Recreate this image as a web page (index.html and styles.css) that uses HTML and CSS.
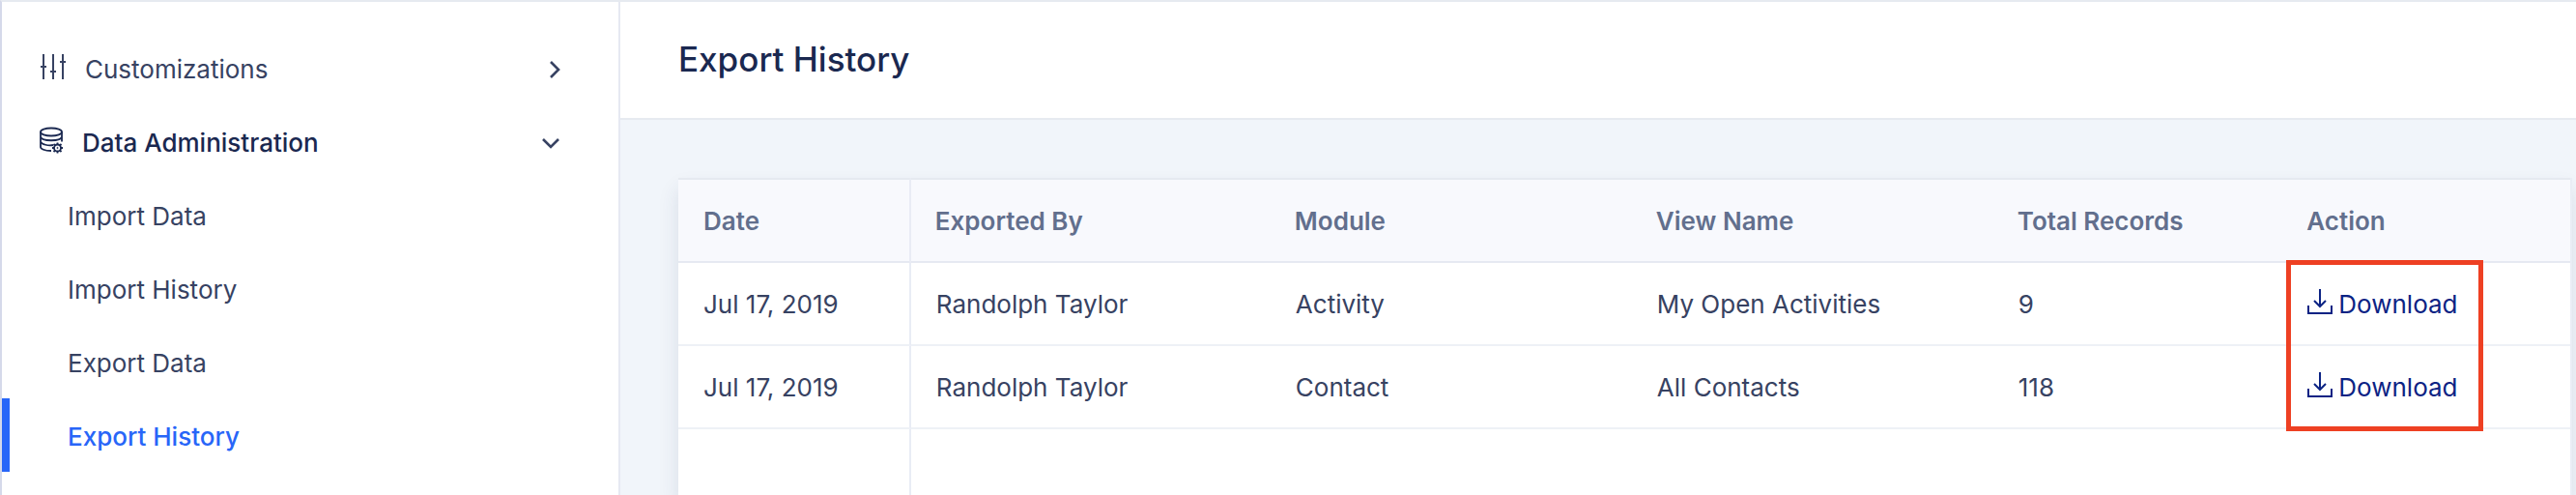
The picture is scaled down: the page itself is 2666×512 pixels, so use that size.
FILE: index.html
```html
<!DOCTYPE html>
<html lang="en">
  <head>
    <meta charset="UTF-8">
    <meta name="viewport" content="width=device-width, initial-scale=1.0">
    <title>Export History</title>
    <link rel="stylesheet" href="styles.css">
  </head>
  <body>
    <!-- Sidebar -->
    <nav class="sidebar">
      <a href="#" class="nav-group">
        <svg class="nav-icon" width="28" height="28" viewBox="0 0 28 28">
          <path d="M4 1v26M14 1v26M24 1v26M1 14h6M11 19h6M21 9h6"/>
        </svg>
        <span class="nav-label">Customizations</span>
        <svg class="chevron" width="20" height="20" viewBox="0 0 20 20">
          <path d="M10 2l8 8-8 8"/>
        </svg>
      </a>
      <a href="#" class="nav-group open">
        <svg class="nav-icon" width="25" height="28" viewBox="0 0 25 28">
          <ellipse cx="12" cy="5.500" rx="11" ry="4"/>
          <path d="M1 5.500v15.500c0 2 4 4 11 4M23 5.500v10M1 10.500c1 5 21 5 22 0M1 15.500c1 3 8 4.500 13 3.500"/>
          <circle cx="18.500" cy="22" r="3.500"/>
          <circle class="dot" cx="18.500" cy="22" r=".6"/>
          <path d="M18.500 18.500v-2M18.500 25.500v2M15 22h-2M22 22h2M16 19.500l-1.500-1.500M21 19.500l1.500-1.500M16 24.500l-1.500 1.500M21 24.500l1.500 1.500"/>
        </svg>
        <span class="nav-label">Data Administration</span>
        <svg class="chevron" width="20" height="20" viewBox="0 0 20 20">
          <path d="M2 6l8 8 8-8"/>
        </svg>
      </a>
      <a href="#" class="nav-item">Import Data</a>
      <a href="#" class="nav-item">Import History</a>
      <a href="#" class="nav-item">Export Data</a>
      <a href="#" class="nav-item active">Export History</a>
    </nav>

    <!-- Main Content -->
    <main class="content">
      <header class="page-header">
        <h1>Export History</h1>
      </header>
      <div class="table-card">
        <table class="history-table">
          <thead>
            <tr>
              <th class="col-date">Date</th>
              <th class="col-user">Exported By</th>
              <th class="col-module">Module</th>
              <th class="col-view">View Name</th>
              <th class="col-total">Total Records</th>
              <th>Action</th>
            </tr>
          </thead>
          <tbody>
            <tr>
              <td>Jul 17, 2019</td>
              <td>Randolph Taylor</td>
              <td>Activity</td>
              <td>My Open Activities</td>
              <td>9</td>
              <td class="action-cell">
                <a href="#" class="download">
                  <svg width="26" height="32" viewBox="0 0 26 32">
                    <path d="M13 1v18M7 13l6 6 6-6M1 18v8h24v-8"/>
                  </svg>
                  Download
                </a>
                <span class="highlight"></span>
              </td>
            </tr>
            <tr>
              <td>Jul 17, 2019</td>
              <td>Randolph Taylor</td>
              <td>Contact</td>
              <td>All Contacts</td>
              <td>118</td>
              <td>
                <a href="#" class="download">
                  <svg width="26" height="32" viewBox="0 0 26 32">
                    <path d="M13 1v18M7 13l6 6 6-6M1 18v8h24v-8"/>
                  </svg>
                  Download
                </a>
              </td>
            </tr>
            <tr class="filler">
              <td></td>
              <td></td>
              <td></td>
              <td></td>
              <td></td>
              <td></td>
            </tr>
          </tbody>
        </table>
      </div>
    </main>
  </body>
</html>
```
FILE: styles.css
```css
/* General Styling */
* {
  box-sizing: border-box;
}

body {
  margin: 0;
  display: flex;
  height: 100vh;
  overflow: hidden;
  font-family: Inter, "Liberation Sans", sans-serif;
  font-size: 26px;
  line-height: 32px;
  color: #374262;
  background-color: #ffffff;
  border-top: 2px solid #e6eaf0;
  border-left: 2px solid #d5d9ea;
}

a {
  color: inherit;
  text-decoration: none;
}

svg {
  display: block;
  fill: none;
  stroke: currentColor;
  stroke-width: 2;
  flex-shrink: 0;
}

/* Sidebar */
.sidebar {
  flex: 0 0 640px;
  padding-top: 30px;
  border-right: 2px solid #e6e9f2;
}

.nav-group,
.nav-item {
  display: flex;
  align-items: center;
  height: 76px;
  padding-top: 3px;
}

.nav-group {
  gap: 19px;
  padding-left: 39px;
  padding-right: 60px;
}

.nav-group.open {
  color: #1a2850;
  font-weight: 500;
}

.nav-icon {
  margin-bottom: 6px;
}

.open .nav-icon {
  stroke-width: 1.8;
}

.open .dot {
  stroke-width: 1;
}

.nav-label {
  flex: 1;
}

.chevron {
  color: #374262;
  stroke-width: 2.6;
}

.nav-item {
  padding-left: 60px;
  border-left: 8px solid transparent;
}

.nav-item.active {
  color: #2866f8;
  font-weight: 500;
  border-left-color: #2866f8;
}

/* Main Content */
.content {
  flex: 1;
  display: flex;
  flex-direction: column;
  background-color: #f1f5fa;
}

.page-header {
  padding: 37px 60px 39px;
  background-color: #ffffff;
  border-bottom: 2px solid #e6eaf0;
}

.page-header h1 {
  margin: 0;
  font-size: 35px;
  line-height: 44px;
  font-weight: 500;
  color: #1a2850;
}

/* Table */
.table-card {
  flex: 1;
  margin: 60px 4px 0 60px;
  background-color: #ffffff;
  box-shadow: 0 12px 20px rgba(40, 60, 100, 0.12);
}

.history-table {
  width: 100%;
  height: 100%;
  table-layout: fixed;
  border-collapse: separate;
  border-spacing: 0;
  border-right: 2px solid #e9edf5;
}

th,
td {
  height: 86px;
  padding: 2px 0 0 26px;
  text-align: left;
  border-bottom: 2px solid #eef1f6;
}

th {
  height: 88px;
  padding-left: 25px;
  font-weight: 600;
  color: #626f8d;
  background-color: #f8f9fd;
  border-top: 2px solid #e6eaf0;
  border-bottom-color: #e6e9f2;
}

th:first-child,
td:first-child {
  padding-left: 26px;
  border-right: 2px solid #e9ecf5;
}

.filler td {
  height: auto;
  border-bottom: none;
}

.col-date {
  width: 12.3%;
}

.col-user {
  width: 19%;
}

.col-module,
.col-view {
  width: 19.1%;
}

.col-total {
  width: 15.3%;
}

/* Download Links */
.download {
  display: flex;
  align-items: center;
  gap: 6px;
  color: #0c2384;
}

.download svg {
  margin-bottom: 2px;
}

.action-cell {
  position: relative;
}

/* Marks the download links of both rows */
.highlight {
  position: absolute;
  top: -3px;
  left: 4px;
  width: 204px;
  height: 177px;
  border: 5px solid #ee4023;
}
```
